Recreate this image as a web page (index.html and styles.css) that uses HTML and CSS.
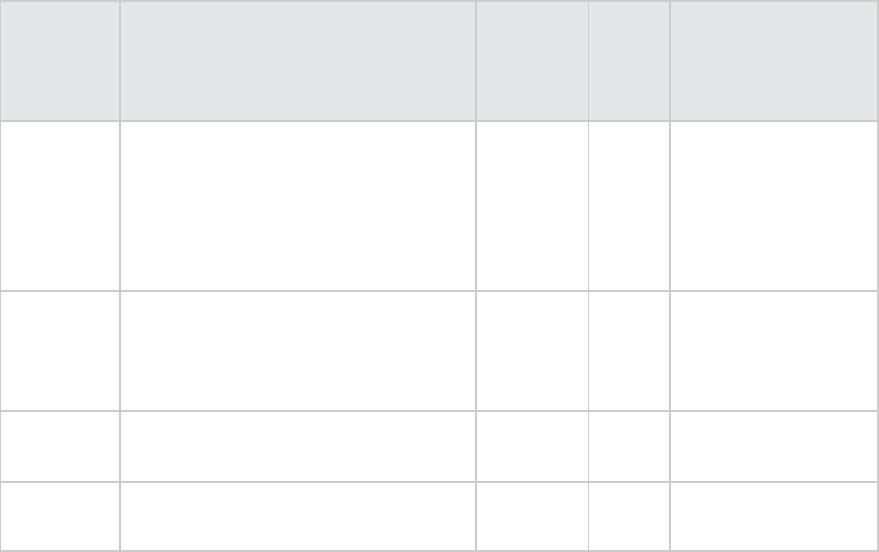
FILE: index.html
```html
<!DOCTYPE html>
<html lang="en">
<head>
<meta charset="utf-8">
<title>Table</title>
<link rel="stylesheet" href="styles.css">
</head>
<body>
<div class="table">
  <div class="cell head c1"></div>
  <div class="cell head c2"></div>
  <div class="cell head c3"></div>
  <div class="cell head c4"></div>
  <div class="cell head c5"></div>

  <div class="cell c1"></div>
  <div class="cell c2"></div>
  <div class="cell c3"></div>
  <div class="cell c4"></div>
  <div class="cell c5"></div>

  <div class="cell c1"></div>
  <div class="cell c2"></div>
  <div class="cell c3"></div>
  <div class="cell c4"></div>
  <div class="cell c5"></div>

  <div class="cell c1 thin-bottom"></div>
  <div class="cell c2 thin-bottom"></div>
  <div class="cell c3 thin-bottom"></div>
  <div class="cell c4 thin-bottom"></div>
  <div class="cell c5 thin-bottom"></div>

  <div class="cell c1"></div>
  <div class="cell c2"></div>
  <div class="cell c3"></div>
  <div class="cell c4"></div>
  <div class="cell c5"></div>
</div>
</body>
</html>
```
FILE: styles.css
```css
html, body {
  margin: 0;
  padding: 0;
  background: #ffffff;
  font-family: "Liberation Sans", Arial, sans-serif;
}

.table {
  display: grid;
  grid-template-columns: 120px 356px 112px 82px 208px;
  grid-template-rows: 120px 170px 120px 71px 69px;
  width: 879px;
  box-sizing: border-box;
  border-left: 1px solid #cccccc;
  border-top: 2px solid #cccccc;
}

.cell {
  box-sizing: border-box;
  border-right: 2px solid #cccccc;
  border-bottom: 2px solid #cccccc;
  background: #ffffff;
}

.cell.c3 {
  border-right-width: 1px;
}

.cell.head {
  background: #e3e7e8;
}
```
